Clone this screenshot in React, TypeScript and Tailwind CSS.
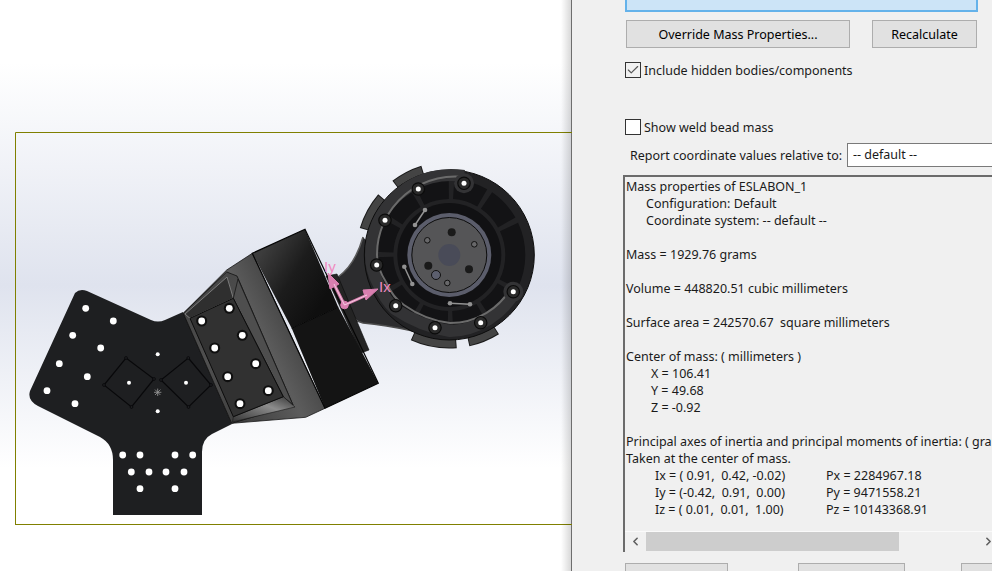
import { Check, ChevronLeft, ChevronRight } from "lucide-react";

const plateHoles = [
  [85.7, 308.3], [113.3, 321], [72.7, 335.3], [100.7, 348], [59.3, 363.7], [87.3, 376.7], [47, 390.7], [75, 403.7],
  [122.7, 455], [140, 455], [175, 455], [192.7, 455], [131.3, 472], [149, 472], [166, 472], [184, 472], [140, 488.7], [175, 488.7],
];
const smallHoles = [[157.7, 354.3], [157.7, 411.3], [129, 382.7], [186, 382.7]];
const housingHoles = [
  [201.7, 321], [229.3, 308.3], [242.3, 335.3], [214.7, 348], [255.7, 363.7], [227.7, 376.7], [268.3, 390.7], [240, 403.7],
];
const dogbones = [
  [126, 358], [154, 379], [131.5, 407], [104, 385],
  [188.3, 358], [211, 385], [188.5, 407], [161, 380],
];
const screws = [
  [464, 183.3], [418.3, 189], [385, 220.3], [376.7, 265], [395.7, 305.7], [435, 327.7], [480.7, 322.7], [513.3, 291.7],
];
const slots = [
  [425, 210, 415, 225],
  [404.3, 266.7, 412.3, 284],
  [450, 303.3, 470, 304.3],
];
// rim tabs, start and end angle in degrees around the rotor centre
const tabs = [
  [232.5, 252.6],
  [196.8, 220.5],
  [85.4, 114.3],
  [57.9, 77.6],
];

function rimArc(r: number, from: number, to: number) {
  const cx = 449.3;
  const cy = 255;
  const a = (from * Math.PI) / 180;
  const b = (to * Math.PI) / 180;
  return `M${cx + r * Math.cos(a)} ${cy + r * Math.sin(a)}A${r} ${r} 0 0 1 ${cx + r * Math.cos(b)} ${cy + r * Math.sin(b)}`;
}

function Model() {
  return (
    <svg width="572" height="571" viewBox="0 0 572 571" className="block">
      <defs>
        <linearGradient id="block" x1="0.1" y1="0.25" x2="0.8" y2="0.75">
          <stop offset="0" stopColor="#3c3c3c" />
          <stop offset="0.5" stopColor="#1c1c1c" />
          <stop offset="1" stopColor="#0f0f0f" />
        </linearGradient>
        <linearGradient id="collar" x1="0" y1="0.8" x2="1" y2="0.2">
          <stop offset="0" stopColor="#2b2b2b" />
          <stop offset="0.55" stopColor="#5c5c5c" />
          <stop offset="0.8" stopColor="#3f3f3f" />
          <stop offset="1" stopColor="#1e1e1e" />
        </linearGradient>
        <linearGradient id="frame" x1="0" y1="0" x2="1" y2="1">
          <stop offset="0" stopColor="#3e3e3e" />
          <stop offset="0.4" stopColor="#505050" />
          <stop offset="1" stopColor="#333" />
        </linearGradient>
        <linearGradient id="lip" x1="0" y1="1" x2="1" y2="0">
          <stop offset="0" stopColor="#333" />
          <stop offset="0.6" stopColor="#8d8d8d" />
          <stop offset="1" stopColor="#333" />
        </linearGradient>
      </defs>
      <path d="M15.500 525V132.500H572M15.500 524.500H572" fill="none" stroke="#808000" />

      {/* base plate */}
      <path
        d="M75 293Q80 288 87 291L151 320Q158 323 165 320L183 312L232 424L212 434Q202 439 202 452V515H113V460Q113 444 100 437L38 406Q27 400 30 391Z"
        fill="#1e1f21"
      />
      <path d="M126 358L154 379L131.500 407L104 385Z" fill="none" stroke="#08080a" strokeWidth="1.200" />
      <path d="M188.300 358L211 385L188.500 407L161 380Z" fill="none" stroke="#08080a" strokeWidth="1.200" />
      {dogbones.map(([x, y]) => (
        <circle key={`${x}-${y}`} cx={x} cy={y} r="1.400" fill="#1e1f21" stroke="#08080a" strokeWidth="0.800" />
      ))}
      {plateHoles.map(([x, y]) => (
        <circle key={`${x}-${y}`} cx={x} cy={y} r="3.400" fill="#fff" />
      ))}
      {smallHoles.map(([x, y]) => (
        <circle key={`${x}-${y}`} cx={x} cy={y} r="2" fill="#fff" />
      ))}
      <path d="M154 392.300H161.400M157.700 388.600V396M155 389.600L160.400 395M160.400 389.600L155 395" stroke="#9a9a9a" strokeWidth="0.800" />

      {/* actuator housing */}
      <path d="M183.300 313.300L226.700 270L252.300 253.300L325 408.300L305.700 417.300L231.700 423.300Z" fill="url(#collar)" stroke="#151515" strokeWidth="0.800" />
      <path d="M183.300 313.300L226.700 272L237 276L293 405L231.700 423.300Z" fill="url(#frame)" stroke="#111" strokeWidth="0.800" />
      <path d="M185 314L227 277L233.300 298.300L190 318.300Z" fill="#2f2f2f" stroke="#8a8a8a" strokeWidth="0.800" />
      <path d="M233.300 298.300L283.300 396.700L293 405L238 279Z" fill="#4e4e4e" stroke="#161616" strokeWidth="0.800" />
      <path d="M233.300 416.700L283.300 396.700L295 407L232.500 422Z" fill="url(#lip)" stroke="#1a1a1a" strokeWidth="0.600" />
      <path d="M190 318.300L233.300 298.300L283.300 396.700L233.300 416.700Z" fill="#313131" stroke="#0c0c0c" />
      {housingHoles.map(([x, y]) => (
        <g key={`${x}-${y}`}>
          <circle cx={x} cy={y} r="5.500" fill="#0f0f0f" />
          <circle cx={x} cy={y} r="3.400" fill="#fff" />
        </g>
      ))}

      {/* arm and rotor */}
      <path d="M338 277Q355 265 363 237L420 300L413 331Q385 325 363 323Q352 320 346 306Z" fill="#2c2c2e" />
      <path d="M338 277Q355 265 363 237" fill="none" stroke="#5a5a5a" strokeWidth="1.500" />
      <path d="M348 318L363 323Q385 325 413 331" fill="none" stroke="#4d4d4d" strokeWidth="1.500" />
      <path d="M326 276L337 274L369 350L361 353Z" fill="#242424" stroke="#0a0a0a" strokeWidth="0.600" />

      {/* gearbox block */}
      <path d="M252.300 253.300L305 229.300L338.300 307.300L291.700 328.300Z" fill="url(#block)" />
      <path d="M291.700 328.300L338.300 307.300L378.300 383.300L325 408.300Z" fill="#141414" />
      <path d="M252.300 253.300L305 229.300L378.300 383.300L325 408.300Z" fill="none" stroke="#050505" strokeWidth="1.200" />
      <path d="M291.700 328.300L338.300 307.300" stroke="#050505" />

      {tabs.map(([from, to]) => (
        <g key={from}>
          <path d={rimArc(88.5, from, to)} fill="none" stroke="#1a1a1a" strokeWidth="10" />
          <path d={rimArc(88.5, from + 0.6, to - 0.6)} fill="none" stroke="#444" strokeWidth="8" />
        </g>
      ))}
      <circle cx="449.300" cy="255" r="85" fill="#222224" stroke="#0c0c0c" />
      <circle cx="449.300" cy="255" r="66" fill="none" stroke="#131315" strokeWidth="20" strokeDasharray="30 5" />
      <path d="M464 176A80 80 0 0 0 371 255Q371 270 378 283Q385 300 395 309Q420 326 450 331A78 78 0 0 0 516 290" fill="none" stroke="#333335" strokeWidth="12" />
      <path d="M470 178A78 78 0 0 0 377 255Q377 268 386 282Q393 298 404 305Q425 320 450 323A70 70 0 0 0 512 286" fill="none" stroke="#6b6b6b" strokeWidth="2" />
      <circle cx="464" cy="183.300" r="10" fill="#333335" />
      <circle cx="513.300" cy="291.700" r="10" fill="#333335" />
      <circle cx="449.300" cy="255" r="52" fill="#111113" />
      <circle cx="449.300" cy="255" r="42" fill="#5b5d6b" />
      <circle cx="449.300" cy="255" r="37.500" fill="#555557" stroke="#0c0c0c" />
      <circle cx="449.300" cy="255" r="11" fill="#494b58" />
      <circle cx="451.700" cy="232.300" r="4" fill="#1a1a1a" />
      <circle cx="428.300" cy="265.700" r="4" fill="#1a1a1a" />
      <circle cx="469" cy="269.300" r="4" fill="#1a1a1a" />
      <circle cx="436" cy="275" r="4.500" fill="#5c5f6e" stroke="#111" />
      <circle cx="427.300" cy="240.300" r="2.800" fill="#68686a" stroke="#111" />
      <circle cx="474.300" cy="244.300" r="2.800" fill="#68686a" stroke="#111" />
      <circle cx="447.300" cy="283" r="2.800" fill="#68686a" stroke="#111" />
      {slots.map(([a, b, c, d]) => (
        <g key={a} fill="#929292">
          <path d={`M${a} ${b}L${c} ${d}`} stroke="#929292" strokeWidth="1.500" />
          <circle cx={a} cy={b} r="2.300" />
          <circle cx={c} cy={d} r="2.300" />
        </g>
      ))}
      {screws.map(([x, y]) => (
        <g key={x}>
          <circle cx={x} cy={y} r="6.200" fill="#2a2a2a" stroke="#0b0b0b" strokeWidth="1.200" />
          <circle cx={x} cy={y} r="2.500" fill="#fff" />
        </g>
      ))}

      {/* principal axes triad */}
      <g stroke="#d97fb0" fill="#d97fb0">
        <path d="M344.500 305L334 284" strokeWidth="3" />
        <path d="M328 273L339 284L330 289Z" />
        <path d="M344.500 305L367 295" strokeWidth="3" />
        <path d="M378 289L366 300L363 290Z" />
        <circle cx="344.500" cy="305" r="3.800" />
      </g>
      <path d="M344.500 305L334 284M344.500 305L367 295" stroke="#f7d5e7" strokeWidth="0.900" />
      <text x="324" y="272" fill="#f08ac0" fontFamily="'Liberation Sans', sans-serif" fontSize="15">Iy</text>
      <text x="379" y="292" fill="#f08ac0" fontFamily="'Liberation Sans', sans-serif" fontSize="15">Ix</text>
    </svg>
  );
}

function DialogButton({ label, className }: { label?: string; className: string }) {
  return (
    <button className={`border border-[#adadad] bg-[#e1e1e1] pt-[2px] text-center text-black ${className}`}>{label}</button>
  );
}

function Line({ children, indent = "" }: { children?: string; indent?: string }) {
  return <div className={`h-[17px] whitespace-pre leading-[17px] ${indent}`}>{children}</div>;
}

function AxisRow({ axis, moment }: { axis: string; moment: string }) {
  return (
    <div className="flex h-[17px] whitespace-pre pl-[29px] leading-[17px]">
      <span className="w-[171px]">{axis}</span>
      <span>{moment}</span>
    </div>
  );
}

export default function App() {
  return (
    <div className="flex h-[571px] w-[992px] overflow-hidden bg-white font-['Noto_Sans',sans-serif] text-[12.5px] text-[#1a1a1a]">
      <div className="relative h-full w-[571px] shrink-0 bg-[linear-gradient(180deg,#ffffff_11%,#dfe3ee_50%,#ffffff_82%)]">
        <Model />
        <div className="absolute inset-y-0 right-0 w-[10px] bg-gradient-to-r from-transparent to-black/15" />
      </div>

      <div className="flex h-full min-w-0 flex-1 flex-col overflow-hidden border-l border-[#6e6e6e] bg-[#f0f0f0] pl-[53px]">
        <div className="h-[12px] w-[353px] shrink-0 border-x-2 border-b-2 border-[#64b2ea] bg-[#cce4f7]" />

        <div className="mt-[8px] flex h-[28px] shrink-0 gap-[22px] pl-[1px]">
          <DialogButton label="Override Mass Properties..." className="w-[224px]" />
          <DialogButton label="Recalculate" className="w-[105px]" />
        </div>

        <label className="mt-[14px] flex h-[16px] shrink-0 items-center">
          <span className="grid h-[16px] w-[16px] place-items-center border border-[#333] bg-[#f0f0f0]">
            <Check size={14} strokeWidth={2} className="text-[#555]" />
          </span>
          <span className="ml-[3px] pt-[2px]">Include hidden bodies/components</span>
        </label>

        <label className="mt-[41px] flex h-[16px] shrink-0 items-center">
          <span className="h-[16px] w-[16px] border border-[#333] bg-white" />
          <span className="ml-[3px] pt-[2px]">Show weld bead mass</span>
        </label>

        <div className="mt-[8px] flex h-[24px] shrink-0 items-center pl-[5px]">
          <span className="w-[217px] shrink-0 whitespace-nowrap pt-[2px]">Report coordinate values relative to:</span>
          <div className="flex h-[24px] w-[160px] shrink-0 items-center border border-[#7a7a7a] bg-white pl-[5px]">-- default --</div>
        </div>

        <div className="mt-[8px] flex h-[377px] w-[376px] shrink-0 flex-col overflow-hidden border-l-2 border-t-2 border-[#6b6b6b] -ml-[2px]">
          <div className="h-[354px] shrink-0 overflow-hidden pl-[1px] pt-[1px]">
            <Line>Mass properties of ESLABON_1</Line>
            <Line indent="pl-[20px]">Configuration: Default</Line>
            <Line indent="pl-[20px]">Coordinate system: -- default --</Line>
            <Line />
            <Line>Mass = 1929.76 grams</Line>
            <Line />
            <Line>Volume = 448820.51 cubic millimeters</Line>
            <Line />
            <Line>Surface area = 242570.67  square millimeters</Line>
            <Line />
            <Line>Center of mass: ( millimeters )</Line>
            <Line indent="pl-[25px]">X = 106.41</Line>
            <Line indent="pl-[25px]">Y = 49.68</Line>
            <Line indent="pl-[25px]">Z = -0.92</Line>
            <Line />
            <Line>Principal axes of inertia and principal moments of inertia: ( grams * square millimeters )</Line>
            <Line>Taken at the center of mass.</Line>
            <AxisRow axis="Ix = ( 0.91,  0.42, -0.02)" moment="Px = 2284967.18" />
            <AxisRow axis="Iy = (-0.42,  0.91,  0.00)" moment="Py = 9471558.21" />
            <AxisRow axis="Iz = ( 0.01,  0.01,  1.00)" moment="Pz = 10143368.91" />
          </div>
          <div className="flex h-[20px] shrink-0 border-t border-[#fafafa] text-[#606060]">
            <span className="grid w-[21px] place-items-center"><ChevronLeft size={13} strokeWidth={3} /></span>
            <span className="w-[253px] bg-[#cdcdcd]" />
            <span className="flex-1" />
            <span className="grid w-[21px] place-items-center"><ChevronRight size={13} strokeWidth={3} /></span>
          </div>
        </div>

        <div className="mt-[11px] flex h-[20px] shrink-0">
          <DialogButton className="w-[103px] shrink-0" />
          <DialogButton className="ml-[70px] w-[107px] shrink-0" />
          <DialogButton className="ml-[56px] w-[60px] shrink-0" />
        </div>
      </div>
    </div>
  );
}
